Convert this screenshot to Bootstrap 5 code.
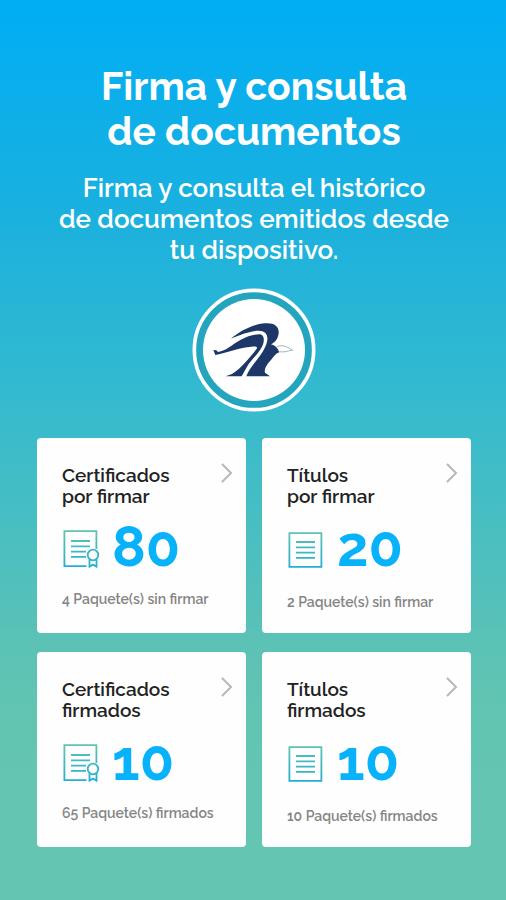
<!DOCTYPE html>
<html lang="es">
<head>
<meta charset="utf-8">
<meta name="viewport" content="width=device-width, initial-scale=1">
<title>Firma y consulta de documentos</title>
<link href="https://cdn.jsdelivr.net/npm/bootstrap@5.3.0/dist/css/bootstrap.min.css" rel="stylesheet">
<style>
body{font-family:Raleway,Lato,sans-serif;min-height:100vh;background:linear-gradient(180deg,#00aef5 0%,#18b0e0 22%,#37bbcd 46%,#5cc2b5 72%,#62c5b2 80%,#64c5b2 100%) no-repeat}
.screen{padding:64px 35px 53px 37px}
h1{font-size:39px;line-height:45px;font-weight:700;margin-bottom:19px}
.intro{font-size:26px;line-height:31px;font-weight:600;margin-bottom:22px}
.emblem{width:124px;height:124px;margin-bottom:26px}
.tiles{display:grid;grid-template-columns:1fr 1fr;gap:19px 16px}
.tile{min-height:195px;border-radius:4px;padding:27px 12px 20px 25px;color:#222;background:#fefefe}
.tile h2{font-size:19px;line-height:21px;font-weight:600;margin:0}
.chevron{width:14px;height:22px;margin-top:-3px}
.figure-row{height:56px;margin-top:13px;gap:12px}
.figure-row svg{width:38px;height:40px}
.count{font-size:56px;line-height:52px;height:56px;font-weight:700;color:#08b2fb}
.note{font-size:14px;line-height:20px;font-weight:600;color:#858585;margin-top:13px}
.doc .note{margin-top:16px}
</style>
<script src="https://cdn.jsdelivr.net/npm/bootstrap@5.3.0/dist/js/bootstrap.bundle.min.js"></script>
</head>
<body>
<svg width="0" height="0" class="position-absolute" aria-hidden="true">
<defs>
<linearGradient id="ink" gradientUnits="userSpaceOnUse" x1="0" y1="0" x2="0" y2="40"><stop offset="0" stop-color="#65c5ad"/><stop offset="1" stop-color="#22aed3"/></linearGradient>
<symbol id="certificate" viewBox="0 0 38 40"><g fill="none" stroke="url(#ink)" stroke-width="1.8"><path d="M24.5 38.1H2.4V3.1h32v17.8M9 13h19M9 18.3h19M9 23.6h15M9 28.9h15"/><circle cx="31" cy="27" r="5.3"/><path d="M27.5 31.5v7.1l3.5-2 3.5 2v-7.1"/></g></symbol>
<symbol id="document" viewBox="0 0 38 40"><g fill="none" stroke="url(#ink)" stroke-width="1.8"><path d="M2.4 5.1h32v33.7h-32zM9 14h19M9 19.3h19M9 24.6h19M9 29.9h19"/></g></symbol>
<symbol id="next" viewBox="0 0 14 22"><path d="M2 2l9 9-9 9" fill="none" stroke="#b7b7b7" stroke-width="2"/></symbol>
</defs>
</svg>
<main class="screen">
<header class="text-center text-white">
<h1>Firma y consulta<br>de documentos</h1>
<p class="intro">Firma y consulta el histórico<br>de documentos emitidos desde<br>tu dispositivo.</p>
<svg class="emblem" viewBox="35 21 372 372" role="img" aria-label="Emblema">
<circle cx="221" cy="207" r="179" fill="#23a5bd" stroke="#fff" stroke-width="11"/>
<circle cx="221" cy="207" r="153" fill="#fff"/>
<g fill="#1c3768">
<path d="M152 173C178 150 215 131 252 127C282 124 297 136 295 157C293 174 284 184 272 190C284 192 291 200 297 214C287 217 281 226 272 237C257 252 251 265 254 275L269 286H198C206 262 226 243 241 221C257 199 269 170 255 156C240 141 195 154 152 173Z"/>
<path d="M99 207L108 208L113 213C137 210 156 190 180 177C202 165 225 159 240 160C253 163 253 181 245 197C232 222 209 239 200 257L184 286H136L155 279C185 260 210 227 228 205C234 197 226 195 213 197C178 200 143 213 105 222Z"/>
</g>
<path d="M290 197C306 190 321 197 337 208C325 207 319 215 297 212" fill="none" stroke="#a9b1b7" stroke-width="3"/>
</svg>
</header>
<section class="tiles">
<a href="#" class="tile cert text-decoration-none">
<div class="d-flex justify-content-between"><h2>Certificados<br>por firmar</h2><svg class="chevron"><use href="#next"/></svg></div>
<div class="figure-row d-flex align-items-center"><svg><use href="#certificate"/></svg><span class="count">80</span></div>
<p class="note mb-0">4 Paquete(s) sin firmar</p>
</a>
<a href="#" class="tile doc text-decoration-none">
<div class="d-flex justify-content-between"><h2>Títulos<br>por firmar</h2><svg class="chevron"><use href="#next"/></svg></div>
<div class="figure-row d-flex align-items-center"><svg><use href="#document"/></svg><span class="count">20</span></div>
<p class="note mb-0">2 Paquete(s) sin firmar</p>
</a>
<a href="#" class="tile cert text-decoration-none">
<div class="d-flex justify-content-between"><h2>Certificados<br>firmados</h2><svg class="chevron"><use href="#next"/></svg></div>
<div class="figure-row d-flex align-items-center"><svg><use href="#certificate"/></svg><span class="count">10</span></div>
<p class="note mb-0">65 Paquete(s) firmados</p>
</a>
<a href="#" class="tile doc text-decoration-none">
<div class="d-flex justify-content-between"><h2>Títulos<br>firmados</h2><svg class="chevron"><use href="#next"/></svg></div>
<div class="figure-row d-flex align-items-center"><svg><use href="#document"/></svg><span class="count">10</span></div>
<p class="note mb-0">10 Paquete(s) firmados</p>
</a>
</section>
</main>
</body>
</html>
